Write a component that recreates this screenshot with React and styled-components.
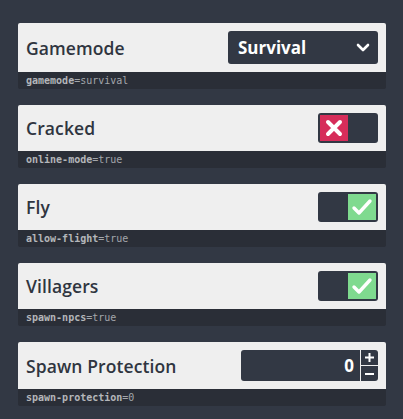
import React, { useState } from 'react';
import styled, { createGlobalStyle } from 'styled-components';

const GlobalStyle = createGlobalStyle`
  html, body {
    margin: 0;
    background: #323844;
  }
`;

const Page = styled.div({
    display: "flex",
    flexDirection: "column",
    gap: "16px",
    padding: "23px 17px 0 18px",
    fontFamily: "'Open Sans', 'Noto Sans', sans-serif",
});

const Card = styled.div({
    borderRadius: "2px",
    overflow: "hidden",
    background: "#2a2e37",
});

const Row = styled.div({
    display: "flex",
    alignItems: "center",
    justifyContent: "space-between",
    background: "#efefef",
    padding: "8px 8px 8px 8px",
});

const Label = styled.div({
    fontSize: "17.5px",
    fontWeight: 600,
    color: "#2f3540",
    letterSpacing: "0.1px",
});

const Footer = styled.div({
    height: "17px",
    lineHeight: "17px",
    paddingLeft: "8px",
    fontFamily: "'DejaVu Sans Mono', monospace",
    fontSize: "10px",
    color: "#a3a6ab",
    "& b": {
        fontWeight: 700,
        color: "#b4b6ba",
    },
});

const Select = styled.div({
    width: "150px",
    height: "33px",
    boxSizing: "border-box",
    background: "#323844",
    borderRadius: "3px",
    display: "flex",
    alignItems: "center",
    justifyContent: "space-between",
    padding: "0 8px 0 10px",
    color: "#ffffff",
    fontSize: "17px",
    fontWeight: 700,
});

const Toggle = styled.div({
    width: "60px",
    height: "30px",
    boxSizing: "border-box",
    background: "#323844",
    borderRadius: "3px",
    padding: "2px",
    display: "flex",
    justifyContent: ({ $on }) => ($on ? "flex-end" : "flex-start"),
});

const Knob = styled.div(({ $on }) => ({
    width: "28px",
    height: "26px",
    background: $on ? "#7fda8f" : "#d62d5a",
    display: "flex",
    alignItems: "center",
    justifyContent: "center",
}));

const NumberBox = styled.div({
    width: "137px",
    height: "31px",
    background: "#323844",
    borderRadius: "3px",
    display: "flex",
    overflow: "hidden",
});

const NumberValue = styled.div({
    flex: 1,
    display: "flex",
    alignItems: "center",
    justifyContent: "flex-end",
    paddingRight: "6px",
    color: "#ffffff",
    fontSize: "17px",
    fontWeight: 700,
});

const Steppers = styled.div({
    width: "17px",
    borderLeft: "1px solid #efefef",
    display: "flex",
    flexDirection: "column",
});

const Step = styled.div({
    flex: 1,
    display: "flex",
    alignItems: "center",
    justifyContent: "center",
    "& + &": {
        borderTop: "1px solid #efefef",
    },
});

const Chevron = () => (
    <svg width="14" height="10" viewBox="0 0 14 10">
        <path d="M2 2 L7 7 L12 2" fill="none" stroke="#fff" strokeWidth="2.6" strokeLinecap="round" strokeLinejoin="round" />
    </svg>
);

const Cross = () => (
    <svg width="18" height="18" viewBox="0 0 18 18">
        <path d="M3 3 L15 15 M15 3 L3 15" stroke="#fff" strokeWidth="4" strokeLinecap="round" />
    </svg>
);

const Check = () => (
    <svg width="22" height="18" viewBox="0 0 22 18">
        <path d="M3 10 L8 15 L19 3" fill="none" stroke="#fff" strokeWidth="3.4" strokeLinecap="round" strokeLinejoin="round" />
    </svg>
);

const Plus = () => (
    <svg width="11" height="11" viewBox="0 0 11 11">
        <path d="M5.5 1 V10 M1 5.5 H10" stroke="#fff" strokeWidth="2" />
    </svg>
);

const Minus = () => (
    <svg width="11" height="11" viewBox="0 0 11 11">
        <path d="M1 6 H10" stroke="#fff" strokeWidth="2" />
    </svg>
);

const Setting = ({ label, keyName, value, children }) => (
    <Card>
        <Row>
            <Label>{label}</Label>
            {children}
        </Row>
        <Footer><b>{keyName}</b>={value}</Footer>
    </Card>
);

export default function App() {
    const [cracked, setCracked] = useState(false);
    const [fly, setFly] = useState(true);
    const [villagers, setVillagers] = useState(true);
    const [protection, setProtection] = useState(0);

    return (
        <>
            <GlobalStyle />
            <Page>
                <Setting label="Gamemode" keyName="gamemode" value="survival">
                    <Select>
                        Survival
                        <Chevron />
                    </Select>
                </Setting>
                <Setting label="Cracked" keyName="online-mode" value="true">
                    <Toggle $on={cracked} onClick={() => setCracked(!cracked)}>
                        <Knob $on={cracked}>{cracked ? <Check /> : <Cross />}</Knob>
                    </Toggle>
                </Setting>
                <Setting label="Fly" keyName="allow-flight" value="true">
                    <Toggle $on={fly} onClick={() => setFly(!fly)}>
                        <Knob $on={fly}>{fly ? <Check /> : <Cross />}</Knob>
                    </Toggle>
                </Setting>
                <Setting label="Villagers" keyName="spawn-npcs" value="true">
                    <Toggle $on={villagers} onClick={() => setVillagers(!villagers)}>
                        <Knob $on={villagers}>{villagers ? <Check /> : <Cross />}</Knob>
                    </Toggle>
                </Setting>
                <Setting label="Spawn Protection" keyName="spawn-protection" value={protection}>
                    <NumberBox>
                        <NumberValue>{protection}</NumberValue>
                        <Steppers>
                            <Step onClick={() => setProtection(protection + 1)}><Plus /></Step>
                            <Step onClick={() => setProtection(Math.max(0, protection - 1))}><Minus /></Step>
                        </Steppers>
                    </NumberBox>
                </Setting>
            </Page>
        </>
    );
}
